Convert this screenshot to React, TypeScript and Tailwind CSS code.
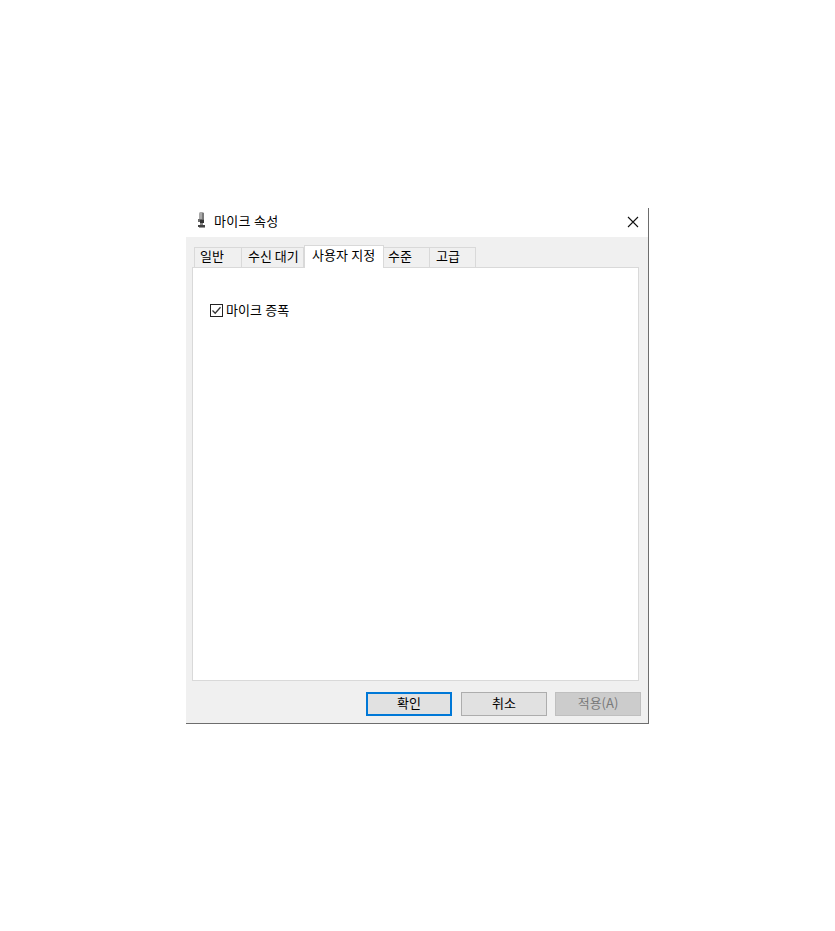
import React from 'react'

const font = { fontFamily: '"Noto Sans CJK KR", "Liberation Sans", sans-serif' }

function MicIcon() {
  return (
    <svg width="16" height="18" viewBox="0 0 16 18" className="shrink-0">
      <rect x="7" y="0" width="5" height="8" rx="1.5" fill="#a8a8a8" />
      <rect x="10" y="1" width="2" height="7" fill="#7a7a7a" />
      <rect x="6" y="7" width="6" height="3" fill="#6a6a6a" />
      <rect x="8" y="8" width="4" height="3" fill="#333333" />
      <rect x="8" y="11" width="3" height="2" fill="#888888" />
      <rect x="6" y="13" width="7" height="2" fill="#444444" />
      <rect x="7" y="15" width="6" height="1" fill="#999999" />
    </svg>
  )
}

function Tab({ label, w, pl, active }: { label: string; w: string; pl: string; active?: boolean }) {
  if (active) {
    return (
      <div className={`${w} ${pl} h-[23px] -mb-px relative z-10 bg-white border border-b-0 border-[#d9d9d9] text-[13px] leading-[17px] tracking-[0.1px] text-black whitespace-nowrap`}>
        {label}
      </div>
    )
  }
  return (
    <div className={`${w} ${pl} h-[20px] bg-[#f0f0f0] border border-l-0 first:border-l border-b-0 border-[#d9d9d9] text-[13px] leading-[16px] text-black whitespace-nowrap`}>
      {label}
    </div>
  )
}

export default function App() {
  return (
    <div className="min-h-[931px] bg-white pt-[208px] pl-[186px]" style={font}>
      <div className="w-[463px] h-[516px] flex flex-col bg-[#f0f0f0] border-r border-b border-[#6d6d6d]">
        <div className="h-[29px] shrink-0 bg-white flex items-center pl-[6px] pr-[9px] pb-[4px]">
          <MicIcon />
          <span className="ml-[6px] text-[13px] tracking-[0.3px] text-black">마이크 속성</span>
          <svg width="12" height="12" viewBox="0 0 12 12" className="ml-auto mt-[2px]">
            <path d="M1 1 L11 11 M11 1 L1 11" stroke="#111111" strokeWidth="1.1" fill="none" />
          </svg>
        </div>

        <div className="flex-1 flex flex-col pl-[6px] pr-[9px] pt-[8px]">
          <div className="flex items-end h-[22px] pl-[2px]">
            <Tab label="일반" w="w-[48px]" pl="pl-[5px]" />
            <Tab label="수신 대기" w="w-[62px]" pl="pl-[6px]" />
            <Tab label="사용자 지정" w="w-[80px]" pl="pl-[7px]" active />
            <Tab label="수준" w="w-[46px]" pl="pl-[4px]" />
            <Tab label="고급" w="w-[46px]" pl="pl-[6px]" />
          </div>

          <div className="h-[414px] bg-white border border-[#d9d9d9] pt-[34px] pl-[17px]">
            <label className="flex items-center gap-[3px] h-[16px] text-[13px] tracking-[0.1px] text-black">
              <span className="w-[13px] h-[13px] border border-[#222222] bg-white flex items-center justify-center">
                <svg width="11" height="11" viewBox="0 0 11 11">
                  <path d="M1.5 5.5 L4.2 8.2 L9.5 2.2" stroke="#333333" strokeWidth="1.3" fill="none" />
                </svg>
              </span>
              마이크 증폭
            </label>
          </div>

          <div className="flex justify-end mt-[11px] -mr-[2px]">
            <button type="button" className="w-[86px] h-[24px] pb-[2px] bg-[#e1e1e1] border-2 border-[#0078d7] text-[13px] leading-[18px] text-black">확인</button>
            <button type="button" className="ml-[9px] w-[86px] h-[24px] pb-[2px] bg-[#e1e1e1] border border-[#adadad] text-[13px] leading-[18px] text-black">취소</button>
            <button type="button" className="ml-[8px] w-[86px] h-[24px] pb-[2px] bg-[#cccccc] border border-[#bfbfbf] text-[13px] leading-[18px] text-[#7a7a7a]">적용(A)</button>
          </div>
        </div>
      </div>
    </div>
  )
}
